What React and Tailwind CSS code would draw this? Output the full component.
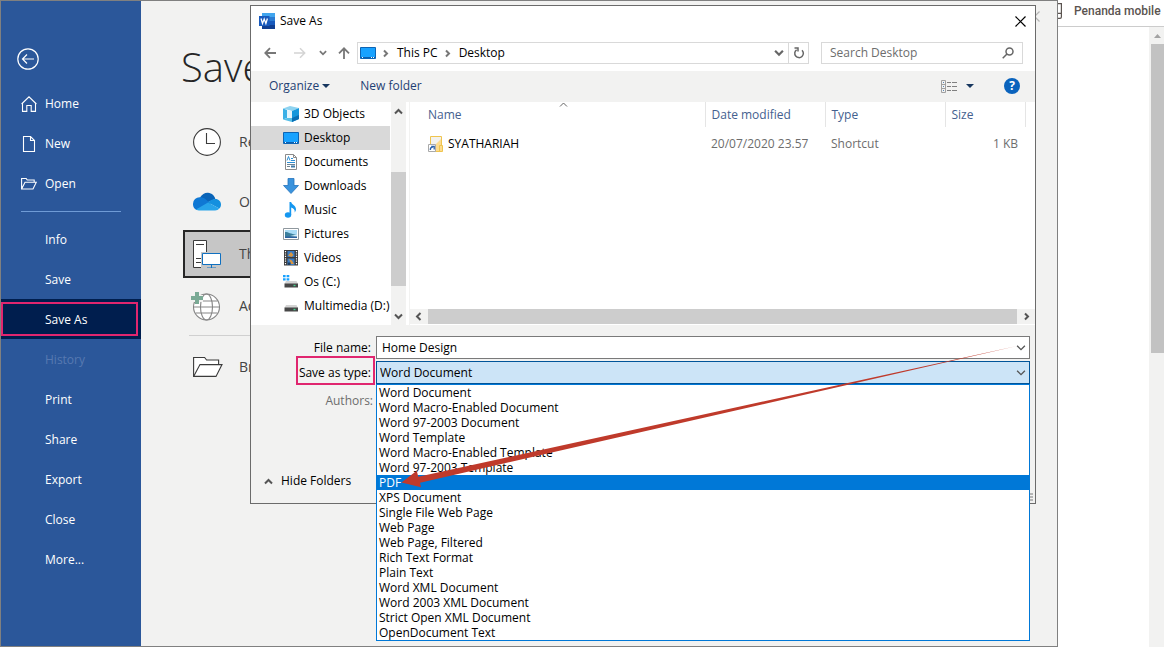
import React, { useState } from 'react';

const fileTypes = [
  'Word Document',
  'Word Macro-Enabled Document',
  'Word 97-2003 Document',
  'Word Template',
  'Word Macro-Enabled Template',
  'Word 97-2003 Template',
  'PDF',
  'XPS Document',
  'Single File Web Page',
  'Web Page',
  'Web Page, Filtered',
  'Rich Text Format',
  'Plain Text',
  'Word XML Document',
  'Word 2003 XML Document',
  'Strict Open XML Document',
  'OpenDocument Text',
];

function HomeIcon() {
  return (
    <svg width="16" height="16" viewBox="0 0 16 16" fill="none" stroke="#fff" strokeWidth="1.1">
      <path d="M0.6 8 8 .8 15.4 8M1.5 7.2v8.2h4.3V9.5h4.4v5.9h4.3V7.2" />
    </svg>
  );
}

function NewIcon() {
  return (
    <svg width="16" height="16" viewBox="0 0 16 16" fill="none" stroke="#fff" strokeWidth="1.1">
      <path d="M2.5.5h7l4 4v11h-11zM9.5.5v4h4" />
    </svg>
  );
}

function OpenIcon() {
  return (
    <svg width="16" height="16" viewBox="0 0 16 16" fill="none" stroke="#fff" strokeWidth="1.1">
      <path d="M.6 13V2.5h4.6l1 1.5h7v2.3M.6 13 4 6.3h11.3L12 13z" />
    </svg>
  );
}

function RecentIcon() {
  return (
    <svg width="28" height="28" viewBox="0 0 28 28">
      <circle cx="14" cy="14" r="13.4" fill="#fff" stroke="#3b3b3b" strokeWidth="1.1" />
      <path d="M13.5 5v10.5H22" fill="none" stroke="#3b3b3b" strokeWidth="1.1" />
    </svg>
  );
}

function OneDriveIcon() {
  return (
    <svg width="28" height="28" viewBox="0 0 28 28">
      <path d="M7 9.5C9 6 12 4.5 15 4.7c4 .3 6.5 3 7.3 6.3L13 15z" fill="#0a64b8" />
      <path d="M7 9.3c2 0 3.6.5 5 1.5l6 5.2-14.5 6A6.5 6.5 0 0 1 0 16a6.6 6.6 0 0 1 7-6.7z" fill="#0f78d4" />
      <path d="M22.3 11c3.5 0 5.7 2.7 5.7 5.5 0 1.7-.6 3-1.7 4L15 14.5c2-2.3 4.5-3.500 7.300-3.500z" fill="#1490df" />
      <path d="M3 21.5 15 14.5l11.3 6c-1 1.3-2.3 2-4.3 2H7c-1.6 0-3-.3-4-1z" fill="#28a4ea" />
    </svg>
  );
}

function ThisPcIcon() {
  return (
    <svg width="28" height="28" viewBox="0 0 28 28">
      <path d="M.5 27.5V.5h13v27z" fill="#fff" stroke="#3b3b3b" />
      <path d="M3 4.5h8M3 18.5h5M3 22.5h5" stroke="#3b3b3b" />
      <path d="M8 12h20v17H8z" fill="#c6c6c6" />
      <path d="M9.5 13.5h18v11h-18z" fill="#fff" stroke="#1070c0" />
      <path d="M18.5 25v3.500M14 28h9" stroke="#1070c0" />
    </svg>
  );
}

function PlaceIcon() {
  return (
    <svg width="28" height="32" viewBox="0 0 28 32" className="overflow-visible">
      <g fill="none" stroke="#858585" strokeWidth="1.1">
        <circle cx="13.5" cy="17" r="13" fill="#fff" />
        <ellipse cx="13.5" cy="17" rx="6" ry="13" />
        <path d="M.5 17h26M2.500 11h22M2.500 23h22" />
      </g>
      <path d="M-3 5h13v7H-3z" fill="#f2f2f1" />
      <path d="M2 2h4v4h4v4H6v4H2v-4h-4V6h4z" fill="#7aaa95" />
    </svg>
  );
}

function BrowseIcon() {
  return (
    <svg width="30" height="22" viewBox="0 0 30 22" fill="#fff" stroke="#3b3b3b" strokeWidth="1.1">
      <path d="M.6 20.4V1.5h11l2 2.500h12v5" />
      <path d="M.6 20.4 7 8.6h22L23 20.4z" />
    </svg>
  );
}

function WordLogo() {
  return (
    <svg width="16" height="16" viewBox="0 0 16 16">
      <path d="M3 0h13v4H3z" fill="#41a5ee" />
      <path d="M3 4h13v4H3z" fill="#2b7cd3" />
      <path d="M3 8h13v4H3z" fill="#185abd" />
      <path d="M3 12h13v4H3z" fill="#103f91" />
      <path d="M0 3h10.5v10H0z" fill="#185abd" />
      <path d="M2 5.5 3.5 10.5 5.2 6l1.7 4.500L8.400 5.500" fill="none" stroke="#fff" strokeWidth="1.3" />
    </svg>
  );
}

function DesktopIcon() {
  return (
    <svg width="16" height="16" viewBox="0 0 16 16">
      <path d="M.5 2.5h15v11H.5z" fill="#18a2ff" stroke="#0d64b4" />
      <path d="M1 12.5h14" stroke="#0b5fae" />
      <path d="M2 12.5h1M11 12.5h1M13 12.5h1" stroke="#fff" />
    </svg>
  );
}

function ObjectsIcon() {
  return (
    <svg width="16" height="16" viewBox="0 0 16 16">
      <path d="M0 2.5 7 0l9 2-7 3z" fill="#8ed3f0" />
      <path d="M9 5l7-3v11l-7 3z" fill="#1597dc" />
      <path d="M0 2.5 4 4v8l-4 1.500z" fill="#3bb0e6" />
      <path d="M4 4l5 1v7H4z" fill="#e6f5fc" />
      <path d="M0 13.5 4 12h5v4z" fill="#56bfe8" />
      <path d="M9 12l7-3v4l-7 3z" fill="#0a6fb4" />
    </svg>
  );
}

function DocumentsIcon() {
  return (
    <svg width="16" height="16" viewBox="0 0 16 16">
      <path d="M2.5.5h8l3 3v12h-11z" fill="#fff" stroke="#8b8b8b" />
      <path d="M10.5.5v3h3" fill="none" stroke="#8b8b8b" />
      <path d="M4 6.5 5.5 2.5 7 6.5M8 4.5h2M8 6.5h4M4 8.5h8" fill="none" stroke="#2d8fd5" />
      <path d="M4 10.5h8M4 12.5h3" stroke="#6f8494" />
      <path d="M8 11.5h4v2H8z" fill="#3f79a6" />
    </svg>
  );
}

function DownloadsIcon() {
  return (
    <svg width="16" height="16" viewBox="0 0 16 16">
      <path d="M5 .5h6v7h4.5L8 15.5.5 7.5H5z" fill="#3a93dd" stroke="#2474bd" strokeWidth=".8" />
    </svg>
  );
}

function MusicIcon() {
  return (
    <svg width="16" height="16" viewBox="0 0 16 16" fill="#1597f0">
      <ellipse cx="5" cy="13" rx="3.2" ry="2.7" />
      <path d="M6.5 0h1.7c.3 2.5 5 3.5 4.8 7.5 0 1-.6 2.2-1.3 3 .4-3-1.2-4.300-3.500-5v7.500H6.500z" />
    </svg>
  );
}

function PicturesIcon() {
  return (
    <svg width="16" height="16" viewBox="0 0 16 16">
      <path d="M.5 2.5h15v11H.5z" fill="#fff" stroke="#8f989e" />
      <path d="M2 4h12v8H2z" fill="#a9dcf6" />
      <path d="M2 6c4 0 5 2 12 3v3H2z" fill="#3a7f9d" />
      <path d="M2 10.5h12V12H2z" fill="#2c62a0" />
      <path d="M7 10l7-1.5v2z" fill="#d5ecf5" />
    </svg>
  );
}

function VideosIcon() {
  return (
    <svg width="16" height="16" viewBox="0 0 16 16">
      <path d="M1 0h14v15.5H1z" fill="#3c3c3c" />
      <path d="M2.5 1v14M13.5 1v14" stroke="#fff" strokeWidth="1.2" strokeDasharray="1.2 1.2" />
      <path d="M4.5 1h7v6h-7zM4.5 8.500h7V15h-7z" fill="#3a7cc4" />
      <path d="M5 5.5 8 2l2.5 3-2 2zM6 9l3 1.5 2 3.500H8z" fill="#d9953f" />
      <path d="M5 12.5h2.5V15H5z" fill="#1d3e63" />
    </svg>
  );
}

function DriveIcon({ system }) {
  return (
    <svg width="16" height="16" viewBox="0 0 16 16">
      {system && <path d="M0 1h2.6v2.3H0zM3.6 1h2.7v2.3H3.6zM0 4.3h2.6v2.3H0zM3.6 4.3h2.7v2.3H3.6z" fill="#18a2ff" />}
      <path d="M3 7h10.5l1.5 3H1.5z" fill="#d3d3d3" />
      <path d="M1.5 9.5h13.5v4H1.5z" fill="#474747" />
      <path d="M10.5 11.5h2" stroke="#45d18b" strokeWidth="1.4" />
    </svg>
  );
}

function ShortcutIcon() {
  return (
    <svg width="16" height="16" viewBox="0 0 16 16">
      <path d="M2.5.5h11v15h-11z" fill="#f3f2ee" stroke="#efc44e" />
      <path d="M13 3v12H6l1-6z" fill="#fddc8e" />
      <path d="M11.5 9.5h3v6h-3z" fill="#fddc8e" stroke="#efc44e" />
      <path d="M.5 8.5h7v7h-7z" fill="#fff" stroke="#a9a9a9" />
      <path d="M2.3 14c0-2 1-3 2.5-3M3.2 10.5h3v3" fill="none" stroke="#2a5fa8" strokeWidth="1.3" />
    </svg>
  );
}

function Chevron({ dir = 'down', className = 'text-[#555555]', width = 2, size = 9 }) {
  const paths = {
    down: 'M1 2.5 4.5 6 8 2.5',
    up: 'M1 6.5 4.5 3 8 6.5',
    left: 'M6.5 1 3 4.5 6.5 8',
    right: 'M3 1.5 6 4.5 3 7.5',
  };
  return (
    <svg width={size} height={size} viewBox="0 0 9 9" fill="none" stroke="currentColor" strokeWidth={width} className={className}>
      <path d={paths[dir]} />
    </svg>
  );
}

function CloseIcon() {
  return (
    <svg width="11" height="11" viewBox="0 0 11 11" stroke="currentColor" strokeWidth="1.2">
      <path d="M.5.5l10 10M10.5.5l-10 10" />
    </svg>
  );
}

function Caret() {
  return (
    <svg width="8" height="4" viewBox="0 0 8 4" fill="#17375f">
      <path d="M0 0h8L4 4z" />
    </svg>
  );
}

const topLinks = [
  { label: 'Home', icon: <HomeIcon /> },
  { label: 'New', icon: <NewIcon /> },
  { label: 'Open', icon: <OpenIcon /> },
];

const menuLinks = ['Info', 'Save', 'Save As', 'History', 'Print', 'Share', 'Export', 'Close', 'More...'];

const folders = [
  { label: '3D Objects', icon: <ObjectsIcon /> },
  { label: 'Desktop', icon: <DesktopIcon /> },
  { label: 'Documents', icon: <DocumentsIcon /> },
  { label: 'Downloads', icon: <DownloadsIcon /> },
  { label: 'Music', icon: <MusicIcon /> },
  { label: 'Pictures', icon: <PicturesIcon /> },
  { label: 'Videos', icon: <VideosIcon /> },
  { label: 'Os (C:)', icon: <DriveIcon system /> },
  { label: 'Multimedia (D:)', icon: <DriveIcon /> },
];

function Sidebar() {
  return (
    <nav className="w-[140px] shrink-0 bg-[#2b579a] pt-[47px] text-white">
      <button aria-label="Back" className="ml-4 block">
        <svg width="22" height="22" viewBox="0 0 22 22" fill="none" stroke="#fff" strokeWidth="1.2">
          <circle cx="11" cy="11" r="10.2" />
          <path d="M17 11H5.5M10 6.5 5.5 11l4.5 4.5" />
        </svg>
      </button>
      <div className="mt-[14px]">
        {topLinks.map(link => (
          <button key={link.label} className="flex h-10 w-full items-center gap-2 pl-5">
            {link.icon}
            {link.label}
          </button>
        ))}
      </div>
      <hr className="mx-5 my-[7px] border-[#6f9bd6]" />
      {menuLinks.map(label => {
        if (label === 'Save As') {
          return (
            <button key={label} className="relative flex h-10 w-full items-center bg-[#001e4e] pt-[2px] pl-11">
              {label}
              <span className="absolute inset-y-[3px] left-0 right-[3px] border-2 border-[#e0266f]" />
            </button>
          );
        }
        return (
          <button
            key={label}
            disabled={label === 'History'}
            className="flex h-10 w-full items-center pt-[2px] pl-11 disabled:text-[#5779b1]"
          >
            {label}
          </button>
        );
      })}
    </nav>
  );
}

function Place({ label, icon, className = 'border-transparent' }) {
  return (
    <button className={`flex h-12 w-[300px] items-center gap-[18px] border-2 pl-2 text-sm text-[#444444] ${className}`}>
      <span className="w-7 shrink-0">{icon}</span>
      {label}
    </button>
  );
}

function Places() {
  return (
    <main className="min-w-0 flex-1 overflow-hidden pt-[42px]">
      <h1 className="pl-10 text-[40px] leading-[48px] font-light text-[#262626]">Save As</h1>
      <div className="mt-[27px] pl-[42px]">
        <Place label="Recent" icon={<RecentIcon />} className="mb-3 border-transparent" />
        <Place label="OneDrive" icon={<OneDriveIcon />} className="mb-1 border-transparent" />
        <Place label="This PC" icon={<ThisPcIcon />} className="mb-1 border-[#262626] bg-[#c6c6c6]" />
        <Place label="Add a Place" icon={<PlaceIcon />} />
        <hr className="mt-[5px] mb-[7px] ml-[6px] w-[294px] border-[#d0d0d0]" />
        <Place label="Browse" icon={<BrowseIcon />} />
      </div>
    </main>
  );
}

function AddressBar() {
  return (
    <div className="flex items-center px-3 pt-[6px] pb-[7px] text-[#777777]">
      <button aria-label="Back" className="ml-px">
        <svg width="12" height="12" viewBox="0 0 12 12" fill="none" stroke="currentColor" strokeWidth="1.8">
          <path d="M12 6H1.5M6 1.2 1.3 6 6 10.8" />
        </svg>
      </button>
      <button aria-label="Forward" className="ml-[18px] text-[#d4d4d4]">
        <svg width="12" height="12" viewBox="0 0 12 12" fill="none" stroke="currentColor" strokeWidth="1.5">
          <path d="M0 6h10.5M6 1.2 10.7 6 6 10.8" />
        </svg>
      </button>
      <button aria-label="Recent locations" className="ml-[13px]">
        <Chevron className="text-[#777777]" size={8} />
      </button>
      <button aria-label="Up" className="ml-[11px]">
        <svg width="12" height="12" viewBox="0 0 12 12" fill="none" stroke="currentColor" strokeWidth="1.8">
          <path d="M6 12V1.5M1 6.3 6 1.3l5 5" />
        </svg>
      </button>
      <div className="ml-[7px] flex h-[22px] flex-1 items-center border border-[#d9d9d9] pl-[2px] text-black">
        <DesktopIcon />
        <span className="ml-[5px]"><Chevron dir="right" className="text-[#777777]" /></span>
        <button className="ml-[7px]">This PC</button>
        <span className="ml-[5px]"><Chevron dir="right" className="text-[#777777]" /></span>
        <button className="ml-[7px]">Desktop</button>
        <button aria-label="Previous locations" className="mr-1 ml-auto">
          <Chevron className="text-[#666666]" size={10} />
        </button>
        <button aria-label="Refresh" className="flex h-full w-5 items-center justify-center border-l border-[#d9d9d9]">
          <svg width="12" height="12" viewBox="0 0 12 12" fill="none" stroke="#666" strokeWidth="1.5">
            <path d="M9 3.2A4.3 4.3 0 1 1 3.6 2.8M1.5 1h3.5v3.5" />
          </svg>
        </button>
      </div>
      <div className="ml-3 flex h-[22px] w-[202px] items-center border border-[#d9d9d9] pr-2 pl-2">
        <input
          aria-label="Search Desktop"
          placeholder="Search Desktop"
          className="min-w-0 flex-1 outline-none placeholder:text-[#6d6d6d]"
        />
        <svg width="12" height="12" viewBox="0 0 12 12" fill="none" stroke="#666" strokeWidth="1.5">
          <circle cx="7.5" cy="4.5" r="3.5" />
          <path d="M5 7 .7 11.3" />
        </svg>
      </div>
    </div>
  );
}

function Toolbar() {
  return (
    <div className="flex h-[31px] items-center bg-[#f2f2f1] pr-[15px] pb-px pl-[18px] text-[#1e3f74]">
      <button className="flex items-center gap-[3px]">
        Organize
        <Caret />
      </button>
      <button className="ml-[30px]">New folder</button>
      <button aria-label="Change view" className="ml-auto flex items-center gap-[9px]">
        <svg width="16" height="13" viewBox="0 0 16 13" fill="none">
          <path d="M.5.5h4v12h-4zM.5 4.5h4M.5 8.5h4" stroke="#a0a0a0" />
          <path d="M2 2.5h1M2 6.5h1M2 10.5h1" stroke="#5a87b5" />
          <path d="M6 2.5h4M11 2.5h5M6 6.5h4M11 6.5h5M6 10.5h4M11 10.5h5" stroke="#808080" />
        </svg>
        <Caret />
      </button>
      <button
        aria-label="Help"
        className="ml-[30px] flex size-4 items-center justify-center rounded-full bg-[#0a63bd] font-bold text-white"
      >
        ?
      </button>
    </div>
  );
}

function FolderTree() {
  return (
    <div className="flex w-[155px] shrink-0">
      <ul className="w-[139px] shrink-0 overflow-hidden">
        {folders.map(folder => (
          <li key={folder.label}>
            <button
              className={`flex h-6 w-full items-center gap-[5px] pl-8 whitespace-nowrap ${
                folder.label === 'Desktop' ? 'bg-[#d9d9d9]' : ''
              }`}
            >
              <span className="shrink-0">{folder.icon}</span>
              {folder.label}
            </button>
          </li>
        ))}
      </ul>
      <div className="ml-px flex w-[15px] flex-col items-center bg-[#f2f2f1] pt-[5px] pb-1">
        <button aria-label="Scroll up"><Chevron dir="up" /></button>
        <div className="mt-14 h-[114px] w-full bg-[#cdcdcd]" />
        <button aria-label="Scroll down" className="mt-auto"><Chevron /></button>
      </div>
    </div>
  );
}

function FileList() {
  return (
    <div className="ml-[3px] flex min-w-0 flex-1 flex-col border-l border-[#f2f2f1]">
      <table className="w-full table-fixed text-left">
        <colgroup>
          <col />
          <col className="w-[120px]" />
          <col className="w-[120px]" />
          <col className="w-[80px]" />
          <col className="w-[10px]" />
        </colgroup>
        <thead className="text-[#44618f]">
          <tr className="h-[25px] *:border-r *:border-[#e5e5e5] *:font-normal">
            <th className="relative pl-[18px]">
              Name
              <span className="absolute -top-[2px] left-0 flex w-full justify-center pl-3">
                <Chevron dir="up" className="text-[#666666]" width={1} />
              </span>
            </th>
            <th className="pl-[6px]">Date modified</th>
            <th className="pl-[6px]">Type</th>
            <th className="pl-[6px]">Size</th>
          </tr>
        </thead>
        <tbody className="text-[#6d6d6d]">
          <tr className="h-[34px]">
            <td className="pl-[18px] text-black">
              <span className="flex items-center gap-1">
                <ShortcutIcon />
                SYATHARIAH
              </span>
            </td>
            <td className="pl-[6px]">20/07/2020 23.57</td>
            <td className="pl-[6px]">Shortcut</td>
            <td className="pr-[7px] text-right">1 KB</td>
          </tr>
        </tbody>
      </table>
      <div className="mt-auto mb-px flex h-[15px] items-center bg-[#f2f2f1] pr-1 pl-1">
        <button aria-label="Scroll left" className="w-[14px]"><Chevron dir="left" /></button>
        <div className="h-full flex-1 bg-[#cdcdcd]" />
        <button aria-label="Scroll right" className="flex w-[14px] justify-end"><Chevron dir="right" /></button>
      </div>
    </div>
  );
}

function SaveForm() {
  const [name, setName] = useState('Home Design');
  const [type, setType] = useState('Word Document');

  return (
    <form className="bg-[#f2f2f1] pt-[11px] pr-[5px] pb-[11px]" onSubmit={e => e.preventDefault()}>
      <div className="grid grid-cols-[125px_1fr] gap-y-[2px]">
        <label htmlFor="file-name" className="flex h-[23px] items-center justify-end pr-[5px]">File name:</label>
        <div className="flex h-[23px] items-center border border-[#7a7a7a] bg-white pr-[3px]">
          <input
            id="file-name"
            value={name}
            onChange={e => setName(e.target.value)}
            className="min-w-0 flex-1 pl-[5px] outline-none"
          />
          <Chevron width={1.2} size={10} />
        </div>

        <label htmlFor="file-type" className="relative flex h-[23px] items-center justify-end pr-[5px]">
          Save as type:
          <span className="absolute -top-[5px] right-px -bottom-px left-[45px] border-2 border-[#e0266f]" />
        </label>
        <div className="relative flex h-[23px] items-center border border-[#005499] bg-[#cce4f7] pr-[3px]">
          <select
            id="file-type"
            value={type}
            onChange={e => setType(e.target.value)}
            className="min-w-0 flex-1 appearance-none pl-[3px] outline-none"
          >
            {fileTypes.map(item => (
              <option key={item}>{item}</option>
            ))}
          </select>
          <Chevron width={1.2} size={10} />

          <ul
            role="listbox"
            aria-label="Save as type"
            className="absolute top-[22px] -right-px -left-px border border-[#0078d7] bg-white leading-[15px]"
          >
            {fileTypes.map(item => (
              <li
                key={item}
                role="option"
                aria-selected={item === 'PDF'}
                onClick={() => setType(item)}
                className="h-[15px] pl-[2px] aria-selected:bg-[#0078d7] aria-selected:text-white"
              >
                {item}
              </li>
            ))}
          </ul>

          <svg
            viewBox="0 0 654 150"
            preserveAspectRatio="none"
            className="pointer-events-none absolute -top-[22px] -left-px h-[150px] w-[calc(100%+2px)]"
          >
            <path d="M25.5 142.4 40.7 130.7 42.3 136.8 641 6 44 142.7 45 147.3z" fill="#bf3a2b" />
          </svg>
        </div>
      </div>
      <div className="mt-[7px] flex h-5 w-[122px] items-center justify-end text-[#6d6d6d]">Authors:</div>
      <button className="mt-[59px] ml-[13px] flex h-[22px] items-center gap-2">
        <Chevron dir="up" />
        Hide Folders
      </button>
    </form>
  );
}

function SaveDialog() {
  return (
    <section
      role="dialog"
      aria-label="Save As"
      className="absolute top-1 right-[21px] left-[249px] border border-[#6b6b6b] bg-white text-black"
    >
      <header className="flex h-[30px] items-center gap-[5px] pr-[9px] pl-2">
        <WordLogo />
        <h2>Save As</h2>
        <button aria-label="Close" className="ml-auto"><CloseIcon /></button>
      </header>
      <AddressBar />
      <Toolbar />
      <div className="flex h-[223px]">
        <FolderTree />
        <FileList />
      </div>
      <SaveForm />
      <svg width="3" height="9" viewBox="0 0 3 9" fill="#b5b5b5" className="absolute right-[2px] bottom-[1px]">
        <path d="M0 0h3v2H0zM0 3h3v2H0zM0 6h3v2H0z" />
      </svg>
    </section>
  );
}

function BrowserEdge() {
  return (
    <aside className="flex w-[106px] shrink-0 flex-col bg-white">
      <div className="flex h-[27px] items-start overflow-hidden border-b border-[#cccccc] pt-[3px] font-[Roboto,sans-serif]">
        <svg width="4" height="16" viewBox="0 0 4 16" fill="none" stroke="#5b5450" strokeWidth="1.2" className="shrink-0">
          <path d="M0 .6h3.4v13.4q0 1.400-1.400 1.400H0M0 10.400h3.400" />
        </svg>
        <button className="ml-3 leading-4 font-medium whitespace-nowrap text-[#5b5450]">Penanda mobile</button>
      </div>
      <div className="ml-auto flex w-[15px] flex-1 flex-col items-end bg-[#f2f2f1]">
        <button aria-label="Scroll page up" className="flex h-[17px] w-[13px] items-center justify-center">
          <svg width="7" height="4" viewBox="0 0 7 4" fill="#a3a3a3">
            <path d="M0 4h7L3.5 0z" />
          </svg>
        </button>
        <div className="h-[309px] w-[13px] bg-[#c2c2c2]" />
      </div>
    </aside>
  );
}

export default function App() {
  return (
    <div className="flex min-h-screen bg-white font-['Open_Sans','Noto_Sans',sans-serif] text-xs">
      <div className="relative flex min-w-0 flex-1 border border-[#808080] bg-[#f2f2f1]">
        <Sidebar />
        <Places />
        <button aria-label="Close window" className="absolute top-[10px] right-[17px] text-[#b5b5b5]">
          <CloseIcon />
        </button>
        <SaveDialog />
      </div>
      <BrowserEdge />
    </div>
  );
}
